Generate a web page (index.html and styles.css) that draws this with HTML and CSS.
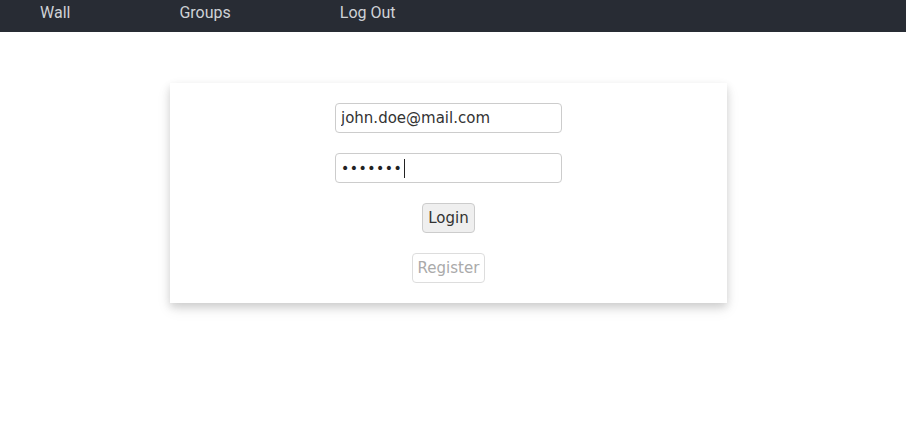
FILE: index.html
```html
<!DOCTYPE html>
<html>
<head>
<meta charset="utf-8">
<link rel="stylesheet" href="styles.css">
</head>
<body>
<nav class="nav">
  <a class="nav-link">Wall</a>
  <a class="nav-link">Groups</a>
  <a class="nav-link">Log Out</a>
</nav>
<main class="main">
  <form class="card">
    <input class="field" type="text" value="john.doe@mail.com">
    <div class="field pw"><span class="dots">•••••••</span><span class="caret"></span></div>
    <button class="btn" type="button">Login</button>
    <button class="btn btn-disabled" type="button">Register</button>
  </form>
</main>
</body>
</html>
```
FILE: styles.css
```css
* { box-sizing: border-box; }
html, body { margin: 0; padding: 0; background: #fff; }
body { font-family: "DejaVu Sans", sans-serif; min-height: 100vh; }
.nav {
  height: 32px;
  background: #282c34;
  display: flex;
  align-items: center;
  padding-left: 40px;
  gap: 109px;
}
.nav-link {
  font-family: Roboto, sans-serif;
  font-size: 16px;
  color: #cfd2d6;
  line-height: 1;
  margin-top: -6px;
}
.main { padding: 51px 0 60px; }
.card {
  width: 557px;
  margin-left: 170px;
  padding: 20px 0;
  background: #fff;
  box-shadow: 0 4px 8px 0 rgba(0,0,0,0.14), 0 6px 14px 0 rgba(0,0,0,0.08);
  display: flex;
  flex-direction: column;
  align-items: center;
  gap: 20px;
}
.field {
  width: 227px;
  height: 30px;
  border: 1px solid #ccc;
  border-radius: 4px;
  padding: 0 5px;
  font-family: "DejaVu Sans", sans-serif;
  font-size: 15px;
  color: #333;
  background: #fff;
  outline: none;
  margin: 0;
}
.pw { display: flex; align-items: center; }
.dots { font-size: 14px; letter-spacing: 0.5px; color: #222; }
.caret { display: inline-block; width: 1px; height: 19px; background: #222; margin-left: 2px; }
.btn {
  height: 30px;
  padding: 0 5px;
  border: 1px solid #ccc;
  border-radius: 4px;
  background: #efefef;
  font-family: "DejaVu Sans", sans-serif;
  font-size: 15px;
  color: #333;
  margin: 0;
}
.btn-disabled {
  background: #fff;
  border-color: #ddd;
  color: #aaa;
}
```
